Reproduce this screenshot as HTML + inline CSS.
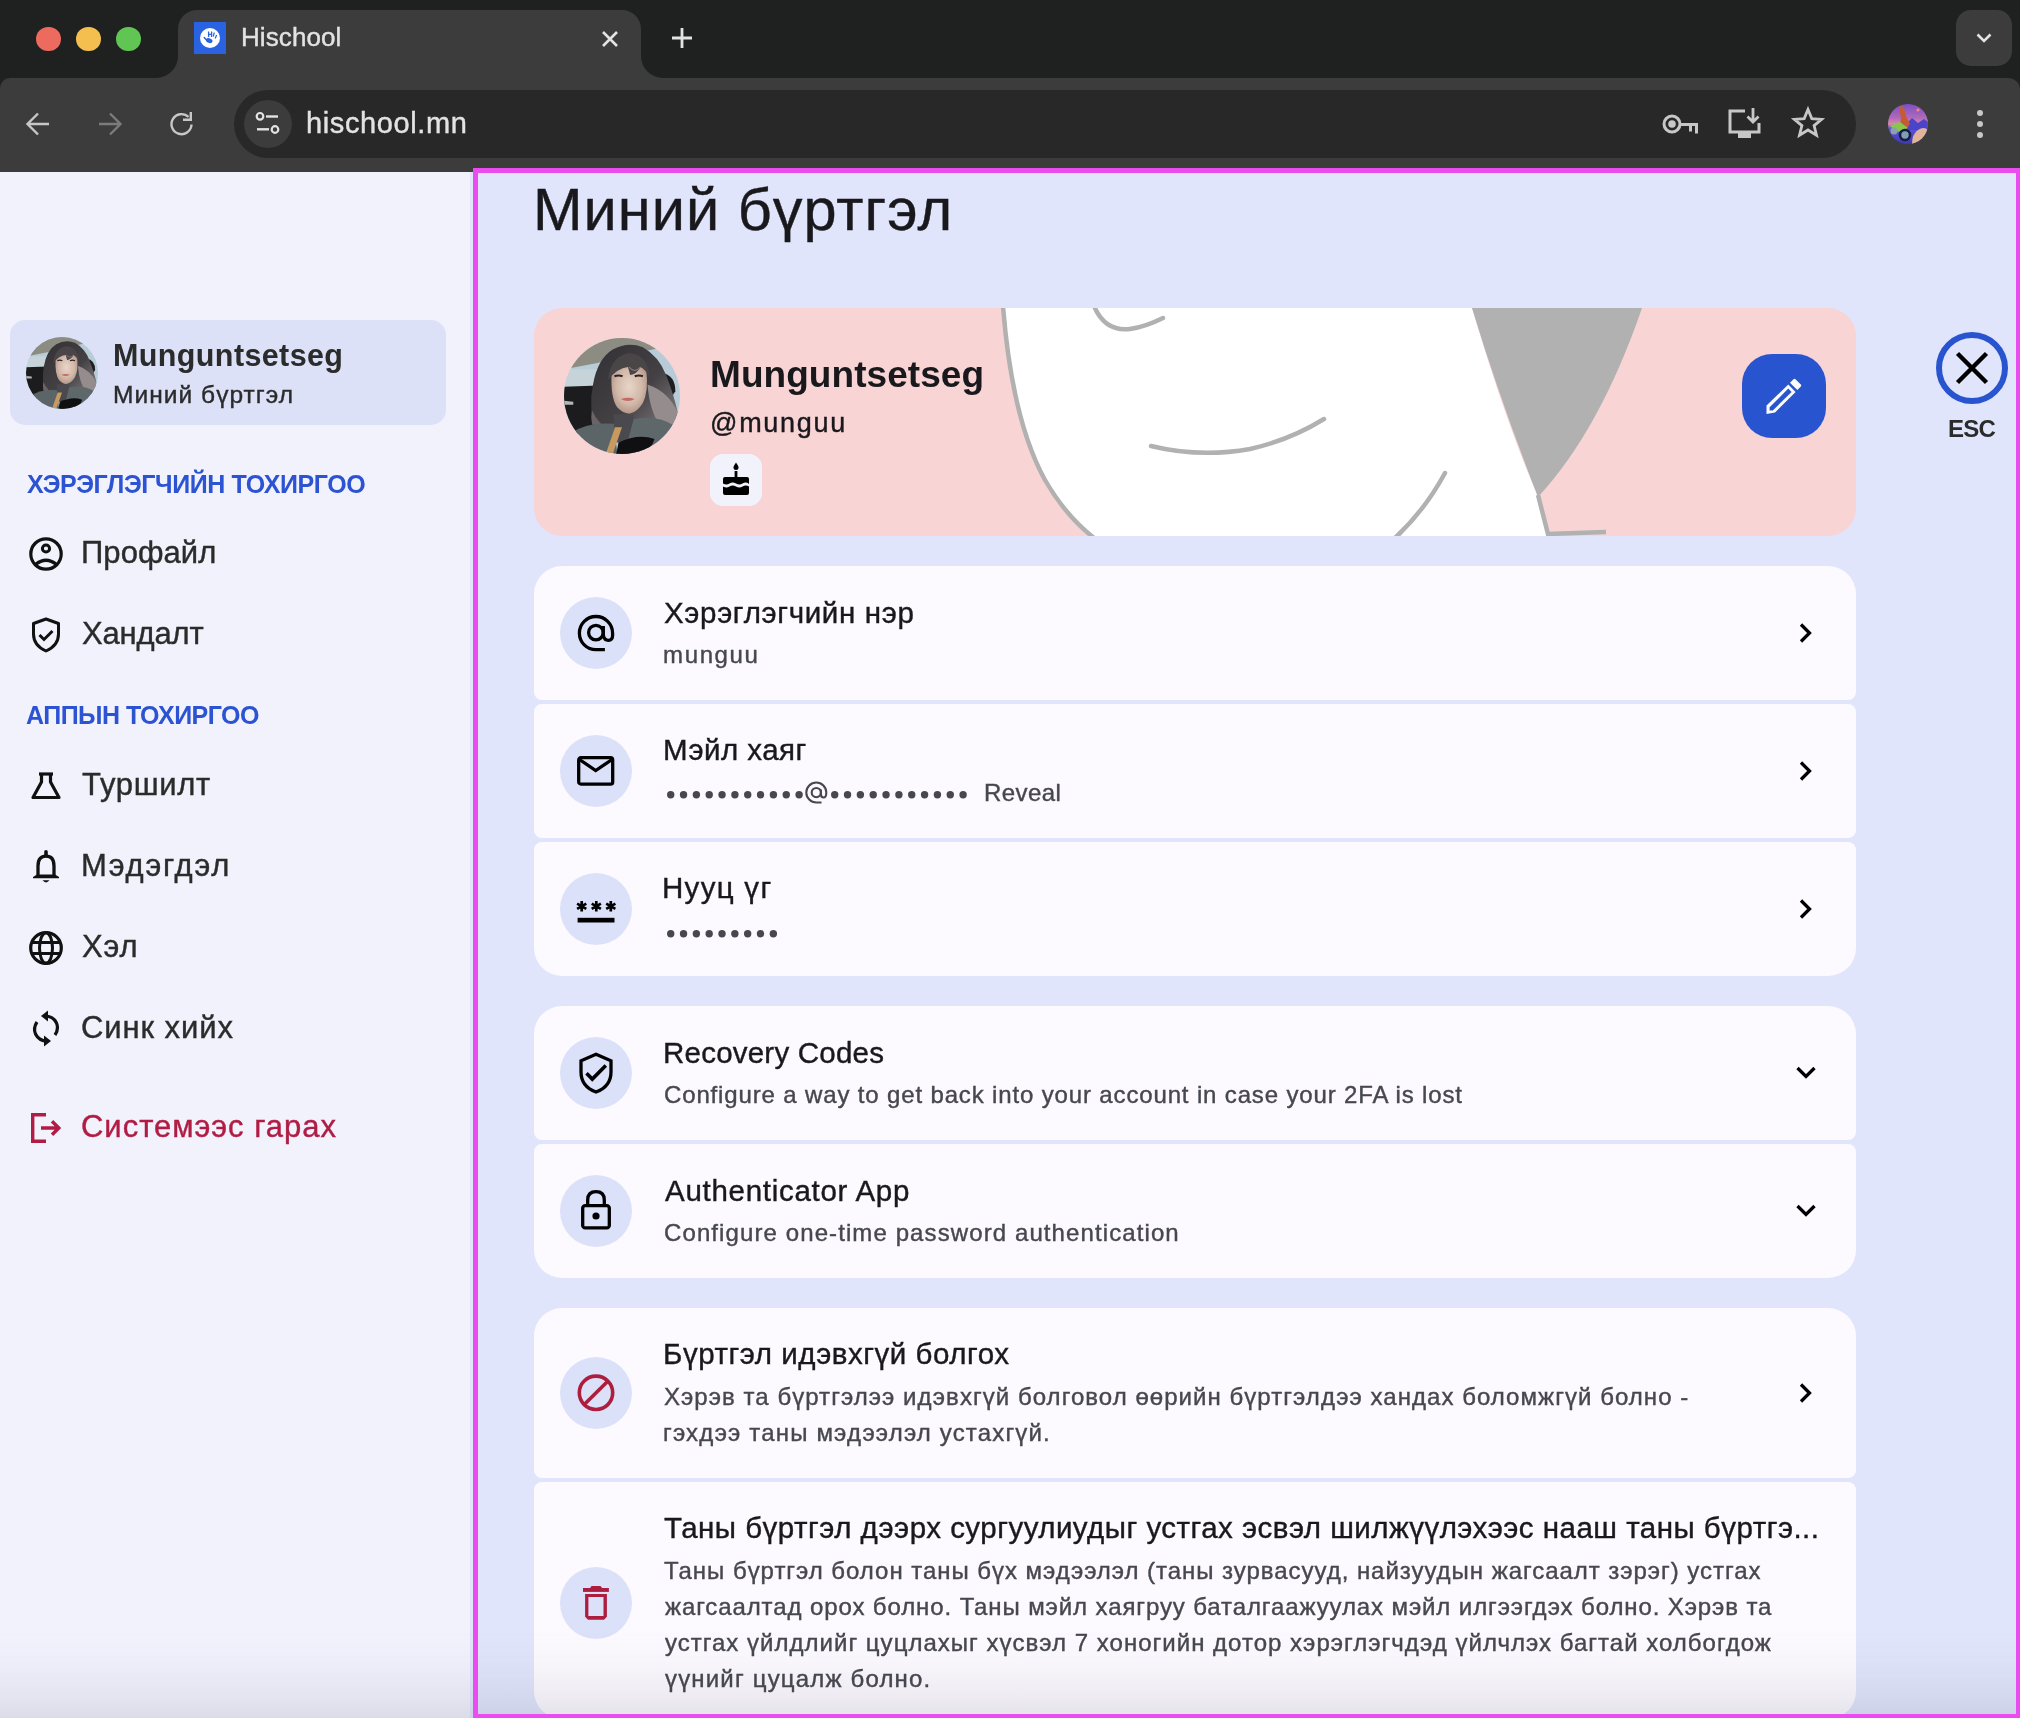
<!DOCTYPE html>
<html><head><meta charset="utf-8">
<style>
html,body{margin:0;padding:0;}
body{width:2020px;height:1718px;position:relative;overflow:hidden;background:#202124;font-family:"Liberation Sans",sans-serif;}
.t{position:absolute;white-space:pre;will-change:transform;}
.r{-webkit-text-stroke:0.4px currentColor;}
.a{position:absolute;}
svg{position:absolute;overflow:visible;}
</style></head><body>
<div class="a" style="left:0;top:0;width:2020px;height:78px;background:#1f2020"></div><div class="a" style="left:0;top:78px;width:2020px;height:94px;background:#3c3c3c;border-radius:10px 12px 0 0"></div><svg style="left:0;top:0" width="2020" height="80">
<path d="M156,78 A22,22 0 0 0 178,56 L178,29 A19,19 0 0 1 197,10 L622,10 A19,19 0 0 1 641,29 L641,56 A22,22 0 0 0 663,78 Z" fill="#3c3c3c"/>
</svg><div class="a" style="left:36px;top:26.5px;width:24.5px;height:24.5px;border-radius:50%;background:#ec6a5e"></div><div class="a" style="left:76px;top:26.5px;width:24.5px;height:24.5px;border-radius:50%;background:#f4bf4f"></div><div class="a" style="left:116px;top:26.5px;width:24.5px;height:24.5px;border-radius:50%;background:#61c554"></div><div class="a" style="left:194px;top:22px;width:32px;height:32px;background:#2a63e1"></div><div class="a" style="left:200px;top:28px;width:20px;height:20px;border-radius:50%;background:#fff"></div><svg style="left:194px;top:22px" width="32" height="32">
<ellipse cx="15.3" cy="18.6" rx="3.3" ry="2.3" fill="#2a63e1" transform="rotate(20 15.3 18.6)"/>
<path d="M10.2,15.5 Q12,17.5 13.5,19" stroke="#2a63e1" stroke-width="1.4" fill="none" stroke-linecap="round"/>
<path d="M14.6,9.5 L14.6,15 M17.6,9.5 L17.6,15 M14.6,12.3 L17.6,12.3" stroke="#2a63e1" stroke-width="1.3"/>
<path d="M20.3,10.5 L19.3,14.5 M22.6,13 L21.2,16.5" stroke="#2a63e1" stroke-width="1.2"/></svg><div class="t r" style="left:240.92px;top:23.06px;font-size:26px;line-height:29.05px;color:#e3e3e3;letter-spacing:0.089px;font-weight:400;">Hischool</div>
<svg style="left:602px;top:30.5px" width="16" height="16"><path d="M1,1 L15,15 M15,1 L1,15" stroke="#e3e3e3" stroke-width="2.6"/></svg><svg style="left:672px;top:28px" width="20" height="20"><path d="M10,0 L10,20 M0,10 L20,10" stroke="#e3e3e3" stroke-width="2.8"/></svg><div class="a" style="left:1956px;top:10px;width:56px;height:56px;border-radius:15px;background:#3c3c3c"></div><svg style="left:1976px;top:33px" width="16" height="10"><path d="M1.5,1.5 L8,8 L14.5,1.5" stroke="#e3e3e3" stroke-width="2.6" fill="none"/></svg><svg style="left:26px;top:112px" width="24" height="24"><path d="M23,12 L2,12 M12,1.5 L1.5,12 L12,22.5" stroke="#c7c7c7" stroke-width="2.4" fill="none"/></svg><svg style="left:98px;top:112px" width="24" height="24"><path d="M1,12 L22,12 M12,1.5 L22.5,12 L12,22.5" stroke="#7b7b7b" stroke-width="2.4" fill="none"/></svg><svg style="left:170px;top:111.5px" width="24" height="25"><path d="M21.5,12.5 A10,10 0 1 1 18.5,5" stroke="#c7c7c7" stroke-width="2.4" fill="none"/><path d="M13,7.8 L20.8,7.8 L20.8,0" stroke="#c7c7c7" stroke-width="2.4" fill="none"/></svg><div class="a" style="left:234px;top:90px;width:1622px;height:68px;border-radius:34px;background:#282828"></div><div class="a" style="left:244px;top:100px;width:48px;height:48px;border-radius:50%;background:#3c3c3c"></div><svg style="left:255px;top:112px" width="26" height="24">
<circle cx="5" cy="4.3" r="3.3" stroke="#e3e3e3" stroke-width="2.2" fill="none"/><path d="M11,4.5 L23,4.5" stroke="#e3e3e3" stroke-width="2.4"/>
<circle cx="20" cy="17.5" r="3.3" stroke="#e3e3e3" stroke-width="2.2" fill="none"/><path d="M2,17.3 L14,17.3" stroke="#e3e3e3" stroke-width="2.4"/></svg><div class="t r" style="left:306.04px;top:107.15px;font-size:29px;line-height:32.40px;color:#e3e3e3;letter-spacing:0.606px;font-weight:400;">hischool.mn</div>
<svg style="left:1662px;top:114px" width="36" height="21">
<circle cx="10" cy="10" r="8" stroke="#c7c7c7" stroke-width="3" fill="none"/><circle cx="10" cy="10" r="3.8" fill="#c7c7c7"/>
<path d="M18,10.5 L34.5,10.5 L34.5,19.5 M28.5,10.5 L28.5,17.5" stroke="#c7c7c7" stroke-width="3" fill="none"/></svg><svg style="left:1728px;top:108px" width="33" height="31">
<path d="M17,3 L2,3 L2,24 L31,24 L31,15" stroke="#c7c7c7" stroke-width="3" fill="none"/>
<rect x="10" y="24" width="13" height="6" fill="#c7c7c7"/>
<path d="M25,0 L25,14 M19.5,8.5 L25,14 L30.5,8.5" stroke="#c7c7c7" stroke-width="2.8" fill="none"/></svg><svg style="left:1792px;top:107px" width="32" height="32">
<path d="M16,2.5 L19.8,11.6 L29.6,12.3 L22.1,18.6 L24.5,28.2 L16,23 L7.5,28.2 L9.9,18.6 L2.4,12.3 L12.2,11.6 Z" stroke="#c7c7c7" stroke-width="2.8" fill="none" stroke-linejoin="miter"/></svg><svg style="left:1888px;top:104px" width="40" height="40">
<defs><clipPath id="pc"><circle cx="20" cy="20" r="20"/></clipPath>
<linearGradient id="pg" x1="0" y1="0" x2="0" y2="1"><stop offset="0" stop-color="#7d4ec8"/><stop offset="0.35" stop-color="#b06ab8"/><stop offset="0.5" stop-color="#d98aa8"/><stop offset="0.62" stop-color="#5b55d6"/><stop offset="1" stop-color="#3c38b4"/></linearGradient></defs>
<g clip-path="url(#pc)"><rect width="40" height="40" fill="url(#pg)"/>
<path d="M16,22 L24,14 L30,19 L36,15 L40,18 L40,26 L16,26 Z" fill="#4a44c8"/>
<path d="M24,40 Q24,30 30,26 Q36,22 40,26 L40,40 Z" fill="#e2b49c"/>
<circle cx="30" cy="6" r="1.6" fill="#f08a70"/>
<path d="M11,3 Q14,1 16,4 L18,12 L22,20 L16,28 L12,22 L13,14 Z" fill="#c65a34"/>
<path d="M2,22 L12,18 L20,24 L10,28 Z" fill="#86c84a"/>
<circle cx="17" cy="31" r="5" stroke="#1b1b48" stroke-width="2.6" fill="#7fa0b2"/>
<circle cx="6" cy="27" r="3.5" fill="#8aa2a8"/></g></svg><div class="a" style="left:1977px;top:110px;width:6px;height:6px;border-radius:50%;background:#c7c7c7"></div><div class="a" style="left:1977px;top:121px;width:6px;height:6px;border-radius:50%;background:#c7c7c7"></div><div class="a" style="left:1977px;top:132px;width:6px;height:6px;border-radius:50%;background:#c7c7c7"></div><div class="a" style="left:0;top:172px;width:470px;height:1546px;background:#f2f2fd"></div><div class="a" style="left:470px;top:172px;width:1550px;height:1546px;background:#e0e5fb"></div><div class="a" style="left:10px;top:320px;width:436px;height:105px;border-radius:15px;background:#dde1f7"></div><svg style="left:26.0px;top:337.0px" width="72" height="72" viewBox="0 0 100 100">
<defs><clipPath id="sac"><circle cx="50" cy="50" r="50"/></clipPath>
<radialGradient id="saf" cx="0.5" cy="0.45" r="0.6"><stop offset="0" stop-color="#e8d6c8"/><stop offset="0.6" stop-color="#d2b8a8"/><stop offset="1" stop-color="#ad9084"/></radialGradient>
<linearGradient id="sah" x1="0" y1="0" x2="1" y2="1"><stop offset="0" stop-color="#323034"/><stop offset="0.55" stop-color="#444145"/><stop offset="1" stop-color="#8e8688"/></linearGradient></defs>
<g clip-path="url(#sac)">
<rect width="100" height="100" fill="#b8ccd8"/>
<path d="M0,0 L100,0 L100,6 Q80,8 60,14 Q30,22 0,27 Z" fill="#8c8c82"/>
<rect x="0" y="27" width="34" height="15" fill="#c6d4da"/>
<path d="M0,42 L30,41 L32,80 L0,84 Z" fill="#1c1c1e"/>
<path d="M0,54 L8,55 L8,57.5 L0,57.5 Z" fill="#b0b8b5"/>
<path d="M84,30 Q96,32 96,46 L92,52 Q86,46 84,38 Z" fill="#1e1e20"/>
<path d="M27,78 Q21,60 25,40 Q29,18 42,10 Q55,3 68,8 Q82,16 88,32 Q95,50 98,64 Q97,76 90,80 L40,84 Z" fill="url(#sah)"/>
<path d="M72,40 Q90,46 98,64 Q97,78 86,80 Q74,66 72,40 Z" fill="#958c8e"/>
<path d="M24,62 Q30,76 42,80 L28,82 Q22,74 24,62 Z" fill="#6a6466"/>
<path d="M41,30 Q40,52 46,60 Q52,66 57,65 Q63,64 68,56 Q73,46 71,28 Q66,23 56,23 Q46,23 41,30 Z" fill="url(#saf)"/>
<path d="M38,36 Q40,16 56,13 Q72,14 74,34 Q70,27 66,25 Q63,31 57,32 Q56,27 55,25 Q46,26 38,36 Z" fill="#4a4648"/>
<path d="M56,25 Q61,31 66,25" stroke="#8e807c" stroke-width="1" fill="none"/>
<path d="M43.5,33 Q47,31.5 50.5,33 M61,33 Q64.5,31.5 68,33" stroke="#2a2226" stroke-width="1.7" fill="none"/>
<path d="M49,52.5 Q55,50.5 61,52.5 Q55,56 49,52.5 Z" fill="#c46a68"/>
<path d="M43,66 L60,66 L58,90 L44,90 Z" fill="#4a4a4e"/>
<path d="M6,82 Q20,72 43,74 L46,100 L0,100 Z" fill="#5b6568"/>
<path d="M60,70 Q80,66 96,76 L100,100 L52,100 Z" fill="#5e686b"/>
<path d="M44,77 L50,77 L42,100 L36,100 Z" fill="#c99a60"/>
<path d="M47,90 Q64,82 78,87 Q76,96 64,100 L45,100 Z" fill="#101012"/>
</g></svg><div class="t" style="left:113.02px;top:337.79px;font-size:30.5px;line-height:34.07px;color:#2b2b2b;letter-spacing:0.387px;font-weight:700;">Munguntsetseg</div>
<div class="t r" style="left:113.04px;top:380.82px;font-size:24.5px;line-height:27.37px;color:#2b2b2b;letter-spacing:1.044px;font-weight:400;">Миний бүртгэл</div>
<div class="t" style="left:26.81px;top:470.87px;font-size:25px;line-height:27.93px;color:#2b53d2;letter-spacing:-0.419px;font-weight:700;">ХЭРЭГЛЭГЧИЙН ТОХИРГОО</div>
<div class="t" style="left:26.38px;top:702.17px;font-size:25px;line-height:27.93px;color:#2b53d2;letter-spacing:-0.530px;font-weight:700;">АППЫН ТОХИРГОО</div>
<div class="t r" style="left:80.52px;top:536.34px;font-size:31px;line-height:34.63px;color:#2b2b2b;letter-spacing:0.054px;font-weight:400;">Профайл</div>
<div class="t r" style="left:82.30px;top:616.94px;font-size:31px;line-height:34.63px;color:#2b2b2b;letter-spacing:-0.157px;font-weight:400;">Хандалт</div>
<div class="t r" style="left:82.30px;top:768.14px;font-size:31px;line-height:34.63px;color:#2b2b2b;letter-spacing:0.681px;font-weight:400;">Туршилт</div>
<div class="t r" style="left:80.52px;top:849.14px;font-size:31px;line-height:34.63px;color:#2b2b2b;letter-spacing:1.596px;font-weight:400;">Мэдэгдэл</div>
<div class="t r" style="left:82.30px;top:929.94px;font-size:31px;line-height:34.63px;color:#2b2b2b;letter-spacing:0.814px;font-weight:400;">Хэл</div>
<div class="t r" style="left:81.45px;top:1010.94px;font-size:31px;line-height:34.63px;color:#2b2b2b;letter-spacing:0.906px;font-weight:400;">Синк хийх</div>
<div class="t r" style="left:81.45px;top:1109.94px;font-size:31px;line-height:34.63px;color:#b01c44;letter-spacing:0.977px;font-weight:400;">Системээс гарах</div>
<svg style="left:29px;top:537px" width="34" height="34">
<circle cx="17" cy="17" r="15.2" stroke="#111111" stroke-width="3.2" fill="none"/>
<circle cx="17" cy="11.5" r="3.6" stroke="#111111" stroke-width="3" fill="none"/>
<path d="M6.5,27.5 Q17,19 27.5,27.5" stroke="#111111" stroke-width="3.2" fill="none"/></svg><svg style="left:31px;top:617px" width="30" height="36" viewBox="0 0 30 36">
<path d="M15,2 L27.5,6.5 L27.5,17 Q27.5,28.5 15,34 Q2.5,28.5 2.5,17 L2.5,6.5 Z" stroke="#111111" stroke-width="3.0" fill="none" stroke-linejoin="round"/>
<path d="M8.5,18 L13,22.5 L21.5,14" stroke="#111111" stroke-width="3.0" fill="none"/></svg><svg style="left:31px;top:772px" width="30" height="28">
<path d="M8,2 L22,2" stroke="#111111" stroke-width="3.2"/>
<path d="M10.5,2 L10.5,10 L2,25.5 L28,25.5 L19.5,10 L19.5,2" stroke="#111111" stroke-width="3.2" fill="none" stroke-linejoin="round"/></svg><svg style="left:32px;top:851px" width="28" height="33">
<path d="M14,0.8 L14,4.5" stroke="#111111" stroke-width="3.6" stroke-linecap="round"/>
<path d="M6,24.5 L6,15 Q6,5.2 14,5.2 Q22,5.2 22,15 L22,24.5" stroke="#111111" stroke-width="3.3" fill="none"/>
<path d="M1,26 Q3,24.5 5,23.5 L23,23.5 Q25,24.5 27,26 L27,27.2 L1,27.2 Z" fill="#111111"/>
<path d="M10.5,29.3 Q14,33.5 17.5,29.3 Z" fill="#111111"/></svg><svg style="left:29px;top:931px" width="34" height="34">
<circle cx="17" cy="17" r="15.3" stroke="#111111" stroke-width="3.2" fill="none"/>
<ellipse cx="17" cy="17" rx="6.5" ry="15.3" stroke="#111111" stroke-width="3" fill="none"/>
<path d="M2,11.5 L32,11.5 M2,22.5 L32,22.5" stroke="#111111" stroke-width="3"/></svg><svg style="left:32px;top:1010px;transform:scaleX(-1)" width="28" height="37">
<path d="M5,25 Q1,19 3.5,13 Q7,6 15,6" stroke="#111111" stroke-width="3.2" fill="none"/>
<path d="M12,0.5 L19,6 L12,11.5 Z" fill="#111111"/>
<path d="M23,12 Q27,18 24.5,24 Q21,31 13,31" stroke="#111111" stroke-width="3.2" fill="none"/>
<path d="M16,25.5 L9,31 L16,36.5 Z" fill="#111111"/></svg><svg style="left:31px;top:1113px" width="31" height="30">
<path d="M15,1.7 L1.7,1.7 L1.7,28.3 L15,28.3" stroke="#b01c44" stroke-width="3.4" fill="none"/>
<path d="M10,15 L27.5,15 M21,8.3 L27.8,15 L21,21.7" stroke="#b01c44" stroke-width="3.4" fill="none"/></svg><div class="t r" style="left:533.24px;top:176.53px;font-size:59.5px;line-height:66.47px;color:#19191d;letter-spacing:1.008px;font-weight:400;">Миний бүртгэл</div>
<div class="a" style="left:534px;top:308px;width:1322px;height:228px;border-radius:28px;background:#f8d4d4;overflow:hidden">
<svg style="left:0;top:0" width="1322" height="228">
<g transform="translate(-534,-308)">
<path d="M1003,308 Q1012,420 1045,480 Q1065,515 1092,536 L1548,536 L1538,497 Q1505,420 1472,308 Z" fill="#ffffff"/>
<path d="M1003,306 Q1012,420 1045,480 Q1065,515 1094,538" stroke="#b1b1b1" stroke-width="4.5" fill="none"/>
<path d="M1472,308 L1642,308 Q1600,430 1538,497 Q1500,400 1472,308 Z" fill="#b1b1b1"/>
<path d="M1538,495 L1549,538 M1548,534 L1606,532" stroke="#b1b1b1" stroke-width="4.5" fill="none"/>
<path d="M1094,306 Q1105,332 1130,329 Q1145,327 1163,318" stroke="#b1b1b1" stroke-width="4.5" fill="none" stroke-linecap="round"/>
<path d="M1151,446 Q1200,458 1250,449 Q1290,440 1324,419" stroke="#b1b1b1" stroke-width="4.5" fill="none" stroke-linecap="round"/>
<path d="M1445,473 Q1425,510 1395,538" stroke="#b1b1b1" stroke-width="4.5" fill="none" stroke-linecap="round"/>
</g></svg></div><svg style="left:564.0px;top:338.0px" width="116" height="116" viewBox="0 0 100 100">
<defs><clipPath id="bac"><circle cx="50" cy="50" r="50"/></clipPath>
<radialGradient id="baf" cx="0.5" cy="0.45" r="0.6"><stop offset="0" stop-color="#e8d6c8"/><stop offset="0.6" stop-color="#d2b8a8"/><stop offset="1" stop-color="#ad9084"/></radialGradient>
<linearGradient id="bah" x1="0" y1="0" x2="1" y2="1"><stop offset="0" stop-color="#323034"/><stop offset="0.55" stop-color="#444145"/><stop offset="1" stop-color="#8e8688"/></linearGradient></defs>
<g clip-path="url(#bac)">
<rect width="100" height="100" fill="#b8ccd8"/>
<path d="M0,0 L100,0 L100,6 Q80,8 60,14 Q30,22 0,27 Z" fill="#8c8c82"/>
<rect x="0" y="27" width="34" height="15" fill="#c6d4da"/>
<path d="M0,42 L30,41 L32,80 L0,84 Z" fill="#1c1c1e"/>
<path d="M0,54 L8,55 L8,57.5 L0,57.5 Z" fill="#b0b8b5"/>
<path d="M84,30 Q96,32 96,46 L92,52 Q86,46 84,38 Z" fill="#1e1e20"/>
<path d="M27,78 Q21,60 25,40 Q29,18 42,10 Q55,3 68,8 Q82,16 88,32 Q95,50 98,64 Q97,76 90,80 L40,84 Z" fill="url(#bah)"/>
<path d="M72,40 Q90,46 98,64 Q97,78 86,80 Q74,66 72,40 Z" fill="#958c8e"/>
<path d="M24,62 Q30,76 42,80 L28,82 Q22,74 24,62 Z" fill="#6a6466"/>
<path d="M41,30 Q40,52 46,60 Q52,66 57,65 Q63,64 68,56 Q73,46 71,28 Q66,23 56,23 Q46,23 41,30 Z" fill="url(#baf)"/>
<path d="M38,36 Q40,16 56,13 Q72,14 74,34 Q70,27 66,25 Q63,31 57,32 Q56,27 55,25 Q46,26 38,36 Z" fill="#4a4648"/>
<path d="M56,25 Q61,31 66,25" stroke="#8e807c" stroke-width="1" fill="none"/>
<path d="M43.5,33 Q47,31.5 50.5,33 M61,33 Q64.5,31.5 68,33" stroke="#2a2226" stroke-width="1.7" fill="none"/>
<path d="M49,52.5 Q55,50.5 61,52.5 Q55,56 49,52.5 Z" fill="#c46a68"/>
<path d="M43,66 L60,66 L58,90 L44,90 Z" fill="#4a4a4e"/>
<path d="M6,82 Q20,72 43,74 L46,100 L0,100 Z" fill="#5b6568"/>
<path d="M60,70 Q80,66 96,76 L100,100 L52,100 Z" fill="#5e686b"/>
<path d="M44,77 L50,77 L42,100 L36,100 Z" fill="#c99a60"/>
<path d="M47,90 Q64,82 78,87 Q76,96 64,100 L45,100 Z" fill="#101012"/>
</g></svg><div class="t" style="left:709.60px;top:354.30px;font-size:37px;line-height:41.34px;color:#19191d;letter-spacing:0.056px;font-weight:700;">Munguntsetseg</div>
<div class="t r" style="left:709.91px;top:407.96px;font-size:27px;line-height:30.16px;color:#19191d;letter-spacing:1.717px;font-weight:400;">@munguu</div>
<div class="a" style="left:710px;top:454px;width:52px;height:52px;border-radius:13px;background:#f2f2fd"></div><svg style="left:722px;top:462px" width="28" height="33">
<path d="M14,0.5 Q11.5,4 11.5,5.5 Q11.5,8 14,8 Q16.5,8 16.5,5.5 Q16.5,4 14,0.5 Z" fill="#000"/>
<rect x="12.6" y="9" width="2.8" height="6" fill="#000"/>
<path d="M3,15 L25,15 Q27,15 27,17 L27,22 Q24,19.5 20.5,21.5 Q17.5,23.5 14,21.5 Q10.5,19.5 7.5,21.5 Q4.5,23.5 1,21.5 L1,17 Q1,15 3,15 Z" fill="#000"/>
<path d="M1,24.5 Q4.5,26.5 7.5,24.5 Q10.5,22.5 14,24.5 Q17.5,26.5 20.5,24.5 Q24,22.5 27,24.5 L27,31 Q27,33 25,33 L3,33 Q1,33 1,31 Z" fill="#000"/></svg><div class="a" style="left:1742px;top:354px;width:84px;height:84px;border-radius:30px;background:#2855cf"></div><svg style="left:1765px;top:377px" width="38" height="38">
<path d="M28.5,2.2 Q29.5,1.3 30.5,2.2 L35.8,7.5 Q36.7,8.5 35.8,9.5 L32.3,13 L25,5.7 Z" fill="#fbfbff"/>
<path d="M23.3,7.6 L30.6,14.9 L10,35.5 L1.5,37 L1.5,28.5 Z M23.3,11.6 L4.6,30.3 L4.6,33.5 L7.8,33.5 L26.6,14.9 Z" fill="#fbfbff" fill-rule="evenodd"/></svg><div class="a" style="left:1936px;top:332px;width:60px;height:60px;border-radius:50%;border:6px solid #2855cf"></div><svg style="left:1955px;top:351px" width="34" height="34"><path d="M2.5,2.5 L31.5,31.5 M31.5,2.5 L2.5,31.5" stroke="#000" stroke-width="4.4"/></svg><div class="t" style="left:1947.94px;top:416.07px;font-size:24px;line-height:26.81px;color:#2b2b2b;letter-spacing:-0.780px;font-weight:700;">ESC</div>
<div class="a" style="left:534px;top:566px;width:1322px;height:134px;background:#fcfafe;border-radius:28px 28px 8px 8px"></div><div class="a" style="left:534px;top:704px;width:1322px;height:134px;background:#fcfafe;border-radius:8px 8px 8px 8px"></div><div class="a" style="left:534px;top:842px;width:1322px;height:134px;background:#fcfafe;border-radius:8px 8px 28px 28px"></div><div class="a" style="left:534px;top:1006px;width:1322px;height:134px;background:#fcfafe;border-radius:28px 28px 8px 8px"></div><div class="a" style="left:534px;top:1144px;width:1322px;height:134px;background:#fcfafe;border-radius:8px 8px 28px 28px"></div><div class="a" style="left:534px;top:1308px;width:1322px;height:170px;background:#fcfafe;border-radius:28px 28px 8px 8px"></div><div class="a" style="left:534px;top:1482px;width:1322px;height:237px;background:#fcfafe;border-radius:8px 8px 28px 28px"></div><div class="a" style="left:560px;top:597px;width:72px;height:72px;border-radius:50%;background:#dce1fa"></div><div class="a" style="left:560px;top:735px;width:72px;height:72px;border-radius:50%;background:#dce1fa"></div><div class="a" style="left:560px;top:873px;width:72px;height:72px;border-radius:50%;background:#dce1fa"></div><div class="a" style="left:560px;top:1037px;width:72px;height:72px;border-radius:50%;background:#dce1fa"></div><div class="a" style="left:560px;top:1175px;width:72px;height:72px;border-radius:50%;background:#dce1fa"></div><div class="a" style="left:560px;top:1357px;width:72px;height:72px;border-radius:50%;background:#dce1fa"></div><div class="a" style="left:560px;top:1567px;width:72px;height:72px;border-radius:50%;background:#dce1fa"></div><div class="t r" style="left:663.84px;top:596.59px;font-size:29.5px;line-height:32.96px;color:#19191d;letter-spacing:0.667px;font-weight:400;">Хэрэглэгчийн нэр</div>
<div class="t r" style="left:663.44px;top:641.77px;font-size:24px;line-height:26.81px;color:#47474f;letter-spacing:1.644px;font-weight:400;">munguu</div>
<div class="t r" style="left:662.64px;top:734.29px;font-size:29.5px;line-height:32.96px;color:#19191d;letter-spacing:0.485px;font-weight:400;">Мэйл хаяг</div>
<svg style="left:666.6px;top:791px" width="150" height="8"><circle cx="3.70" cy="3.7" r="3.7" fill="#47474f"/><circle cx="16.54" cy="3.7" r="3.7" fill="#47474f"/><circle cx="29.38" cy="3.7" r="3.7" fill="#47474f"/><circle cx="42.22" cy="3.7" r="3.7" fill="#47474f"/><circle cx="55.06" cy="3.7" r="3.7" fill="#47474f"/><circle cx="67.90" cy="3.7" r="3.7" fill="#47474f"/><circle cx="80.74" cy="3.7" r="3.7" fill="#47474f"/><circle cx="93.58" cy="3.7" r="3.7" fill="#47474f"/><circle cx="106.42" cy="3.7" r="3.7" fill="#47474f"/><circle cx="119.26" cy="3.7" r="3.7" fill="#47474f"/><circle cx="132.10" cy="3.7" r="3.7" fill="#47474f"/></svg><svg style="left:831px;top:791px" width="150" height="8"><circle cx="3.70" cy="3.7" r="3.7" fill="#47474f"/><circle cx="16.54" cy="3.7" r="3.7" fill="#47474f"/><circle cx="29.38" cy="3.7" r="3.7" fill="#47474f"/><circle cx="42.22" cy="3.7" r="3.7" fill="#47474f"/><circle cx="55.06" cy="3.7" r="3.7" fill="#47474f"/><circle cx="67.90" cy="3.7" r="3.7" fill="#47474f"/><circle cx="80.74" cy="3.7" r="3.7" fill="#47474f"/><circle cx="93.58" cy="3.7" r="3.7" fill="#47474f"/><circle cx="106.42" cy="3.7" r="3.7" fill="#47474f"/><circle cx="119.26" cy="3.7" r="3.7" fill="#47474f"/><circle cx="132.10" cy="3.7" r="3.7" fill="#47474f"/></svg><svg style="left:805px;top:781px" width="23" height="26">
<circle cx="11.3" cy="11.6" r="4.6" stroke="#47474f" stroke-width="2.1" fill="none"/>
<path d="M15.9,8.5 L15.9,13 Q15.9,16.5 18.6,16.5 Q21.3,16.5 21.3,11.5 A10,10 0 1 0 11.3,21.5 L16.5,21.5" stroke="#47474f" stroke-width="2.1" fill="none"/></svg><div class="t r" style="left:984.38px;top:779.77px;font-size:24px;line-height:26.81px;color:#47474f;letter-spacing:0.448px;font-weight:400;">Reveal</div>
<div class="t r" style="left:662.14px;top:872.49px;font-size:29.5px;line-height:32.96px;color:#19191d;letter-spacing:1.294px;font-weight:400;">Нууц үг</div>
<svg style="left:667px;top:930px" width="120" height="8"><circle cx="3.70" cy="3.7" r="3.7" fill="#47474f"/><circle cx="16.53" cy="3.7" r="3.7" fill="#47474f"/><circle cx="29.36" cy="3.7" r="3.7" fill="#47474f"/><circle cx="42.19" cy="3.7" r="3.7" fill="#47474f"/><circle cx="55.02" cy="3.7" r="3.7" fill="#47474f"/><circle cx="67.85" cy="3.7" r="3.7" fill="#47474f"/><circle cx="80.68" cy="3.7" r="3.7" fill="#47474f"/><circle cx="93.51" cy="3.7" r="3.7" fill="#47474f"/><circle cx="106.34" cy="3.7" r="3.7" fill="#47474f"/></svg><div class="t r" style="left:662.64px;top:1037.19px;font-size:29.5px;line-height:32.96px;color:#19191d;letter-spacing:0.224px;font-weight:400;">Recovery Codes</div>
<div class="t r" style="left:663.80px;top:1081.77px;font-size:24px;line-height:26.81px;color:#47474f;letter-spacing:0.854px;font-weight:400;">Configure a way to get back into your account in case your 2FA is lost</div>
<div class="t r" style="left:664.93px;top:1174.59px;font-size:29.5px;line-height:32.96px;color:#19191d;letter-spacing:0.714px;font-weight:400;">Authenticator App</div>
<div class="t r" style="left:663.80px;top:1219.87px;font-size:24px;line-height:26.81px;color:#47474f;letter-spacing:1.100px;font-weight:400;">Configure one-time password authentication</div>
<div class="t r" style="left:662.64px;top:1337.99px;font-size:29.5px;line-height:32.96px;color:#19191d;letter-spacing:0.527px;font-weight:400;">Бүртгэл идэвхгүй болгох</div>
<div class="t r" style="left:664.46px;top:1383.67px;font-size:24px;line-height:26.81px;color:#47474f;letter-spacing:1.044px;font-weight:400;">Хэрэв та бүртгэлээ идэвхгүй болговол өөрийн бүртгэлдээ хандах боломжгүй болно -</div>
<div class="t r" style="left:663.38px;top:1420.07px;font-size:24px;line-height:26.81px;color:#47474f;letter-spacing:1.168px;font-weight:400;">гэхдээ таны мэдээлэл устахгүй.</div>
<div class="t r" style="left:664.34px;top:1511.79px;font-size:29.5px;line-height:32.96px;color:#19191d;letter-spacing:0.483px;font-weight:400;">Таны бүртгэл дээрх сургуулиудыг устгах эсвэл шилжүүлэхээс нааш таны бүртгэ...</div>
<div class="t r" style="left:664.46px;top:1558.27px;font-size:24px;line-height:26.81px;color:#47474f;letter-spacing:0.964px;font-weight:400;">Таны бүртгэл болон таны бүх мэдээлэл (таны зурвасууд, найзуудын жагсаалт зэрэг) устгах</div>
<div class="t r" style="left:664.94px;top:1593.97px;font-size:24px;line-height:26.81px;color:#47474f;letter-spacing:0.896px;font-weight:400;">жагсаалтад орох болно. Таны мэйл хаягруу баталгаажуулах мэйл илгээгдэх болно. Хэрэв та</div>
<div class="t r" style="left:664.94px;top:1629.87px;font-size:24px;line-height:26.81px;color:#47474f;letter-spacing:1.015px;font-weight:400;">устгах үйлдлийг цуцлахыг хүсвэл 7 хоногийн дотор хэрэглэгчдэд үйлчлэх багтай холбогдож</div>
<div class="t r" style="left:664.94px;top:1665.77px;font-size:24px;line-height:26.81px;color:#47474f;letter-spacing:1.176px;font-weight:400;">үүнийг цуцалж болно.</div>
<svg style="left:1799px;top:623px" width="14" height="20"><path d="M2,1.5 L10.5,10 L2,18.5" stroke="#000" stroke-width="3.3" fill="none"/></svg><svg style="left:1799px;top:761px" width="14" height="20"><path d="M2,1.5 L10.5,10 L2,18.5" stroke="#000" stroke-width="3.3" fill="none"/></svg><svg style="left:1799px;top:899px" width="14" height="20"><path d="M2,1.5 L10.5,10 L2,18.5" stroke="#000" stroke-width="3.3" fill="none"/></svg><svg style="left:1799px;top:1383px" width="14" height="20"><path d="M2,1.5 L10.5,10 L2,18.5" stroke="#000" stroke-width="3.3" fill="none"/></svg><svg style="left:1796px;top:1066px" width="20" height="14"><path d="M1.5,2 L10,10.5 L18.5,2" stroke="#000" stroke-width="3.3" fill="none"/></svg><svg style="left:1796px;top:1204px" width="20" height="14"><path d="M1.5,2 L10,10.5 L18.5,2" stroke="#000" stroke-width="3.3" fill="none"/></svg><svg style="left:570px;top:606px" width="52" height="54">
<circle cx="25.9" cy="26.6" r="7.3" stroke="#000" stroke-width="3.3" fill="none"/>
<path d="M34.9,43.7 L26,43.7 A16.6,16.6 0 1 1 42.6,27 L42.6,29.5 Q42.6,34.3 38.4,34.3 Q34.2,34.3 33.4,29.5 L33.3,20" stroke="#000" stroke-width="3.3" fill="none"/></svg><svg style="left:577px;top:756px" width="38" height="30">
<rect x="1.7" y="1.7" width="34" height="26.4" rx="2.2" stroke="#000" stroke-width="3.3" fill="none"/>
<path d="M2.5,3.5 L18.7,14.5 L35,3.5" stroke="#000" stroke-width="3.3" fill="none"/></svg><svg style="left:575px;top:900px" width="42" height="24"><path d="M6.7,1.0 L6.7,11.5 M2.1,3.6 L11.3,8.9 M2.1,8.9 L11.3,3.6" stroke="#000" stroke-width="2.7"/><path d="M21.3,1.0 L21.3,11.5 M16.7,3.6 L25.9,8.9 M16.7,8.9 L25.9,3.6" stroke="#000" stroke-width="2.7"/><path d="M35.8,1.0 L35.8,11.5 M31.2,3.6 L40.4,8.9 M31.2,8.9 L40.4,3.6" stroke="#000" stroke-width="2.7"/><rect x="2.6" y="17.8" width="36.9" height="4.7" fill="#000"/></svg><svg style="left:579px;top:1052px" width="34" height="42">
<path d="M17,2.2 L32,8.8 L32,20 Q32,34.5 17,40 Q2,34.5 2,20 L2,8.8 Z" stroke="#000" stroke-width="3.3" fill="none" stroke-linejoin="miter"/>
<path d="M7.5,21.3 L13.3,27.1 L26.8,13.6" stroke="#000" stroke-width="3.6" fill="none"/></svg><svg style="left:581px;top:1190px" width="31" height="40">
<rect x="1.7" y="15.6" width="26.6" height="22.3" rx="2.5" stroke="#000" stroke-width="3.3" fill="none"/>
<path d="M6.7,15.6 L6.7,10 Q6.7,1.7 15,1.7 Q23.3,1.7 23.3,10 L23.3,15.6" stroke="#000" stroke-width="3.3" fill="none"/>
<circle cx="15" cy="26" r="3.6" fill="#000"/></svg><svg style="left:575px;top:1372px" width="42" height="42">
<circle cx="21" cy="20.8" r="16.7" stroke="#ad1d3d" stroke-width="3.6" fill="none"/>
<path d="M32.5,9.5 L9.5,32.2" stroke="#ad1d3d" stroke-width="3.6"/></svg><svg style="left:583px;top:1586px" width="26" height="34">
<path d="M7.1,2 L8.5,0 L17.5,0 L19.1,2 Z" fill="#ad1d3d"/>
<rect x="0" y="2" width="25.9" height="3.9" fill="#ad1d3d"/>
<path d="M2.1,7.9 L23.9,7.9 L23.9,30.7 L21,33.7 L5,33.7 L2.1,30.7 Z M5.4,11 L5.4,30.1 L20.5,30.1 L20.5,11 Z" fill="#ad1d3d" fill-rule="evenodd"/></svg><div class="a" style="left:0;top:1630px;width:2020px;height:88px;background:linear-gradient(to bottom,rgba(60,60,90,0) 0%,rgba(60,60,90,0.025) 40%,rgba(60,60,90,0.07) 75%,rgba(60,60,90,0.12) 100%)"></div><div class="a" style="left:473px;top:168px;width:1538px;height:1541px;border:5px solid #ea4cf0;border-right-width:4px;border-bottom-width:4px"></div></body></html>
